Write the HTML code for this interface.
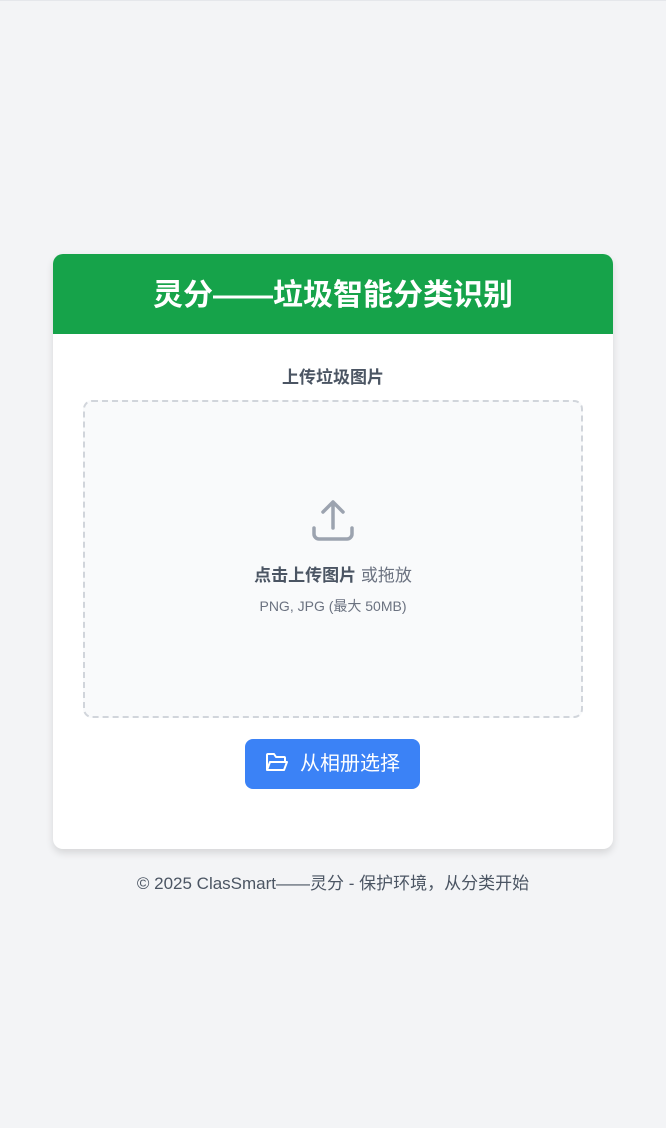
<!DOCTYPE html>
<html><head><meta charset="utf-8"><style>
*{margin:0;padding:0;box-sizing:border-box}
body{width:666px;height:1128px;background:#f3f4f6;font-family:"Liberation Sans","Noto Sans CJK SC",sans-serif;position:relative;box-shadow:inset 0 1px 0 #e5e7eb}
.card{position:absolute;left:53px;top:254px;width:560px;height:595px;background:#fff;border-radius:10px;box-shadow:0 4px 8px rgba(0,0,0,.12);overflow:hidden}
.hd{height:80px;background:#16a34a;color:#fff;font-weight:bold;font-size:30px;text-align:center;line-height:84px}
.lbl{position:absolute;top:109px;left:0;width:100%;text-align:center;font-weight:bold;font-size:17px;color:#4b5563}
.dz{position:absolute;left:30px;top:146px;width:500px;height:318px;border:2px dashed #d1d5db;border-radius:9px;background:#f9fafb}
.ic{position:absolute;left:224px;top:96px}
.t1{position:absolute;top:159px;width:100%;text-align:center;font-size:17px;color:#6b7280}
.t1 b{color:#4b5563}
.t2{position:absolute;top:194px;width:100%;text-align:center;font-size:14px;color:#6b7280}
.btn{position:absolute;left:192px;top:485px;width:175px;height:50px;background:#3b82f6;border-radius:8px;color:#fff;font-size:20px;line-height:50px;padding-left:55px}
.btn svg{position:absolute;left:20px;top:13px}
.ft{position:absolute;top:869px;width:100%;text-align:center;font-size:17px;color:#4b5563}
</style></head><body>
<div class="card">
<div class="hd">灵分——垃圾智能分类识别</div>
<div class="lbl">上传垃圾图片</div>
<div class="dz">
<svg class="ic" width="48" height="48" viewBox="0 0 48 48" fill="none" stroke="#9ca3af" stroke-width="3.5" stroke-linecap="round" stroke-linejoin="round"><path d="M24 30V4M14 14L24 4L34 14M5 30v6a5 5 0 0 0 5 5h28a5 5 0 0 0 5-5v-6"/></svg>
<div class="t1"><b>点击上传图片</b> 或拖放</div>
<div class="t2">PNG, JPG (最大 50MB)</div>
</div>
<div class="btn"><svg width="24" height="22" viewBox="0 0 24 22" fill="none" stroke="#fff" stroke-width="2" stroke-linejoin="round"><path d="M2 18V3a1 1 0 0 1 1-1h6l2 3h8a1 1 0 0 1 1 1v3"/><path d="M2 18l3-8h17l-3 8z"/></svg>从相册选择</div>
</div>
<div class="ft">© 2025 ClasSmart——灵分 - 保护环境，从分类开始</div>
</body></html>
